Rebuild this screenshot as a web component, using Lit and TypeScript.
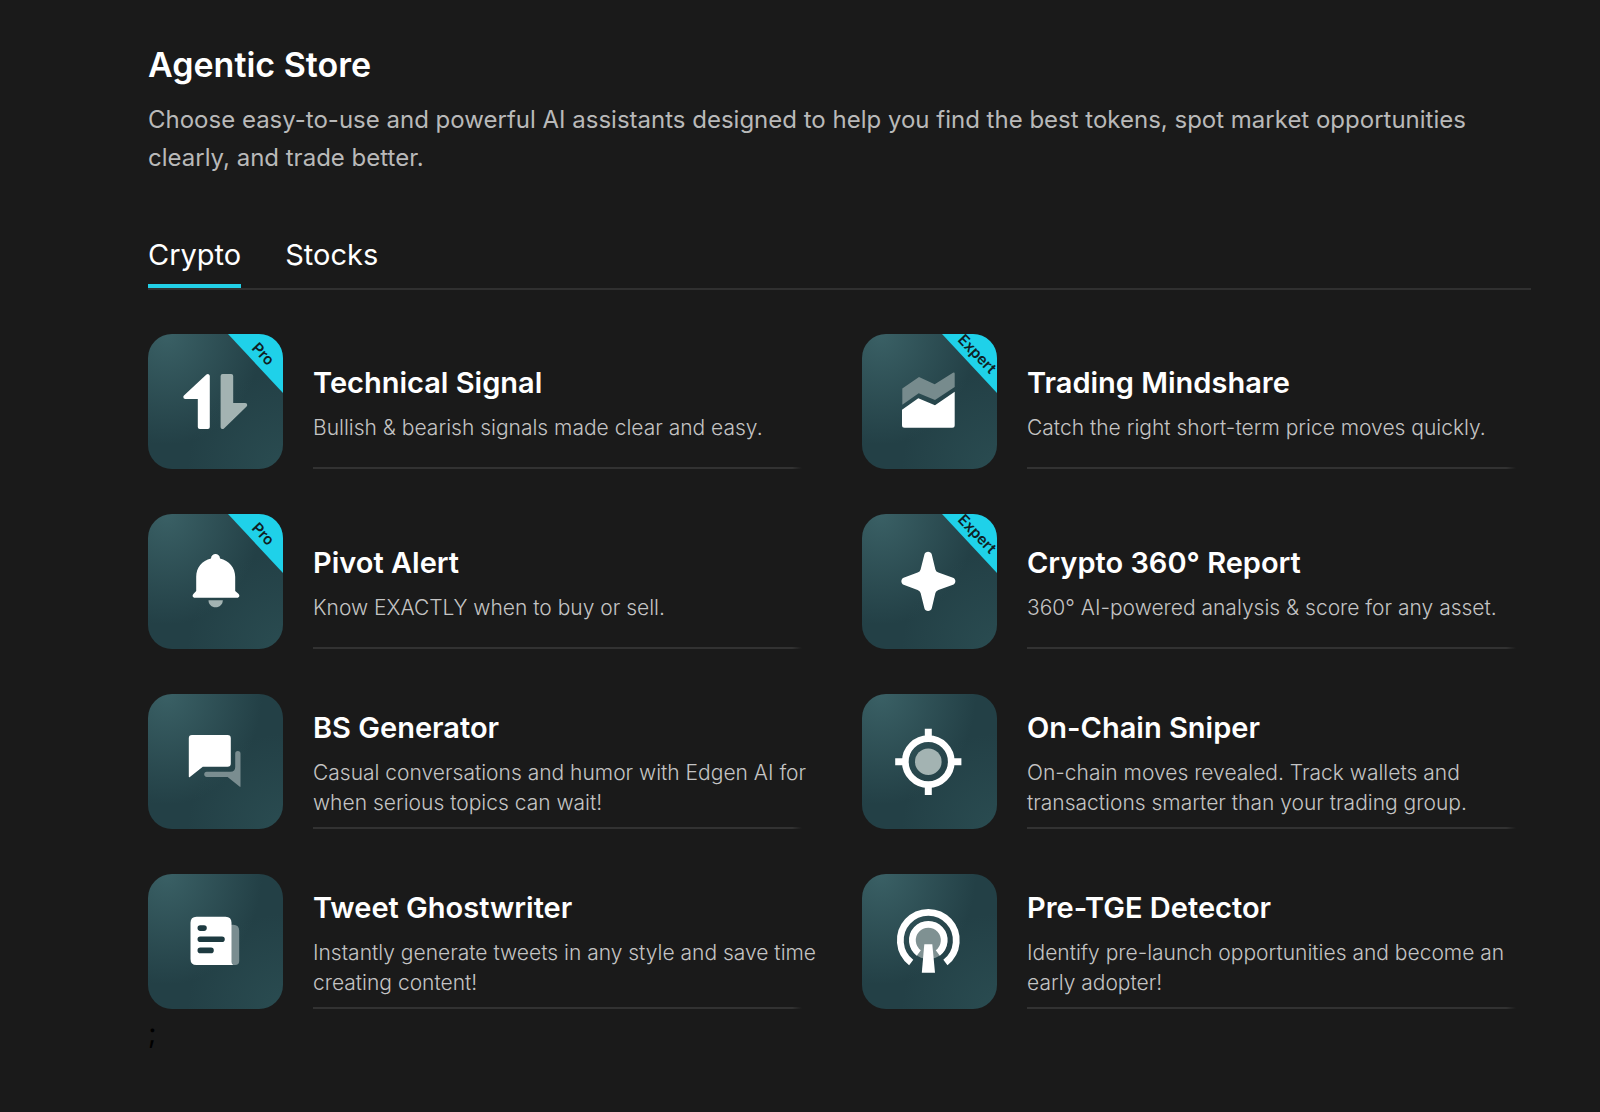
import { LitElement, html, css, svg, nothing, type TemplateResult } from "lit";
import { customElement, property, state } from "lit/decorators.js";

interface Agent {
  name: string;
  text: string;
  icon: string;
  plan?: string;
}

const AGENTS: Agent[] = [
  { name: "Technical Signal", text: "Bullish & bearish signals made clear and easy.", icon: "signal", plan: "Pro" },
  { name: "Trading Mindshare", text: "Catch the right short-term price moves quickly.", icon: "chart", plan: "Expert" },
  { name: "Pivot Alert", text: "Know EXACTLY when to buy or sell.", icon: "bell", plan: "Pro" },
  { name: "Crypto 360° Report", text: "360° AI-powered analysis & score for any asset.", icon: "star", plan: "Expert" },
  { name: "BS Generator", text: "Casual conversations and humor with Edgen AI for when serious topics can wait!", icon: "chat" },
  { name: "On-Chain Sniper", text: "On-chain moves revealed. Track wallets and transactions smarter than your trading group.", icon: "target" },
  { name: "Tweet Ghostwriter", text: "Instantly generate tweets in any style and save time creating content!", icon: "page" },
  { name: "Pre-TGE Detector", text: "Identify pre-launch opportunities and become an early adopter!", icon: "beacon" },
];

const ICONS: Record<string, TemplateResult> = {
  signal: svg`
    <path d="M59.8 42V93H51.8V63H37.3Z" fill="#fff" stroke="#fff" stroke-width="4" stroke-linejoin="round"/>
    <path d="M74.6 42H83.2V71H97.2L74.6 93Z" fill="#a3b3b2" stroke="#a3b3b2" stroke-width="4" stroke-linejoin="round"/>`,
  chart: svg`
    <path d="M40.3 54.6L57 43L72.7 50.3L91 38.8Q92.7 38 92.7 39.8V53L73 66L56.7 59.3L40.3 70.7Z" fill="#778b8d"/>
    <path d="M40 75.7L56.3 64.3L73 71.3L92.7 57.7V91.2Q92.7 93.7 90.2 93.7H42.5Q40 93.7 40 91.2Z" fill="#fff"/>`,
  bell: svg`
    <path d="M63 44.5C63 38.4 72 38.4 72 44.5C81 46.5 87.2 53.6 87.2 62.7V77L90.4 79.7C92.2 81.4 91.2 83.7 89.2 83.7H46.8C44.8 83.7 43.8 81.4 45.6 79.7L48.2 77V62.7C48.2 53.6 54 46.5 63 44.5Z" fill="#fff"/>
    <path d="M60.5 86.3H74.8C74.8 90.6 71.6 93.3 67.6 93.3S60.5 90.6 60.5 86.3Z" fill="#a3b3b2"/>`,
  star: svg`
    <path d="M62.4 40.4C63.2 36.8 68.9 36.8 69.8 40.4L73.4 55.4Q74 57.8 76.4 58.6L91 63.8C94.2 65 94.2 69.6 91 70.8L76.4 75.9Q74 76.7 73.4 79L69.8 94.2C68.9 97.8 63.2 97.8 62.4 94.2L58.6 79Q58 76.7 55.6 75.9L41.6 70.8C38.6 69.6 38.6 65 41.6 63.8L55.6 58.6Q58 57.8 58.6 55.4Z" fill="#fff"/>`,
  chat: svg`
    <path d="M44 41H79.6Q82.8 41 82.8 44.2V69.5Q82.8 72.7 79.6 72.7H54.8L41.9 83Q40.8 83.6 40.8 82.4V44.2Q40.8 41 44 41Z" fill="#fff"/>
    <path d="M89.8 57Q92.5 57 92.5 59.7V92.2Q92.5 93.4 91.5 92.6L79.6 83H58.8C55.3 83 55.3 77.7 58.8 77.7H82.5Q87.2 77.7 87.2 73V59.7Q87.2 57 89.8 57Z" fill="#7a8d90"/>`,
  target: svg`
    <circle cx="66.3" cy="67.7" r="23" fill="none" stroke="#fff" stroke-width="6.8"/>
    <path d="M66.3 34.7V45M66.3 90.5V101M33.2 67.7H43.5M89 67.7H99.4" stroke="#fff" stroke-width="7"/>
    <circle cx="66.3" cy="67.7" r="13.3" fill="#a3b3b2"/>`,
  page: svg`
    <path d="M81 50.7H85.2Q91.2 50.7 91.2 56.7V87Q91.2 91 87.2 91H81Z" fill="#7a8d90"/>
    <path d="M48.5 42.7H77.5Q83.5 42.7 83.5 48.7V88Q83.5 90 85.2 91H48.5Q42.5 91 42.5 85V48.7Q42.5 42.7 48.5 42.7Z" fill="#fff"/>
    <path d="M52.3 54.1H56M52.3 65.3H74M52.3 76.4H63" stroke="#1d3a40" stroke-width="5.6" stroke-linecap="round"/>`,
  beacon: svg`
    <circle cx="66.3" cy="66.3" r="19" fill="#7f9192"/>
    <path d="M49.2 88.5A28 28 0 1 1 83.4 88.5M56.8 79A15.9 15.9 0 1 1 75.8 79" fill="none" stroke="#fff" stroke-width="6.8"/>
    <path d="M62.3 70.3H70.3L73 98.7H59.8Z" fill="#fff"/>`,
};

@customElement("agent-card")
export class AgentCard extends LitElement {
  @property({ attribute: false }) agent!: Agent;

  static styles = css`
    :host { display: block; }
    .card { display: flex; gap: 30px; color: inherit; text-decoration: none; }
    .tile {
      position: relative;
      flex: none;
      width: 135px;
      height: 135px;
    }
    .icon {
      display: block;
      width: 100%;
      height: 100%;
      border-radius: 24px;
      background:
        radial-gradient(circle at 100% 100%, #2a4c51 0, #2a4c5100 50%),
        radial-gradient(ellipse at 14% 0%, #3a6065 0, #3a606500 58%),
        #234046;
    }
    .ribbon {
      position: absolute;
      top: 0;
      right: 0;
      width: 55px;
      height: 59px;
      border-top-right-radius: 24px;
      background: #1fd1e9;
      clip-path: polygon(0 0, 100% 0, 100% 100%);
    }
    .plan {
      position: absolute;
      top: 20px;
      left: 115px;
      width: max-content;
      translate: -50% -50%;
      rotate: 46deg;
      color: #0f1f24;
      font-size: 15px;
      font-weight: 600;
      line-height: 20px;
    }
    .body {
      position: relative;
      flex: 1;
      min-width: 0;
      display: flex;
      flex-direction: column;
      justify-content: center;
      gap: 12px;
      padding-top: 4px;
      box-sizing: border-box;
    }
    .body::after {
      content: "";
      position: absolute;
      left: 0;
      right: 15px;
      bottom: 0;
      height: 2px;
      background: linear-gradient(90deg, #323232 98%, #32323200);
    }
    .name { margin: 0; font-size: 29px; line-height: 36px; font-weight: 600; color: #fff; }
    .text { margin: 0; font-size: 21px; line-height: 30px; font-weight: 300; color: #c4c4c4; }
  `;

  render() {
    const { name, text, icon, plan } = this.agent;
    return html`
      <a class="card" href="#">
        <div class="tile">
          <svg class="icon" viewBox="0 0 135 135" aria-hidden="true">${ICONS[icon]}</svg>
          ${plan ? html`<div class="ribbon"></div><span class="plan">${plan}</span>` : nothing}
        </div>
        <div class="body">
          <h2 class="name">${name}</h2>
          <p class="text">${text}</p>
        </div>
      </a>
    `;
  }
}

@customElement("app-root")
export class AppRoot extends LitElement {
  @state() private tab = "Crypto";

  static styles = css`
    :host {
      display: block;
      min-height: 100vh;
      box-sizing: border-box;
      padding: 43px 69px 44px 148px;
      background: #1a1a1a;
      color: #fff;
      font-family: Inter, "Liberation Sans", sans-serif;
    }
    .title { margin: 0; font-size: 34px; line-height: 44px; font-weight: 600; }
    .intro { margin: 14px 0 0; font-size: 24px; line-height: 38px; font-weight: 400; color: #b9b9b9; }
    .tabs { display: flex; gap: 44px; margin-top: 54px; border-bottom: 2px solid #303030; }
    .tab {
      padding: 6px 0 11px;
      border: 0;
      border-bottom: 4px solid transparent;
      background: none;
      color: #fff;
      font: inherit;
      font-size: 29px;
      line-height: 36px;
      font-weight: 400;
      cursor: pointer;
    }
    .tab.active { border-color: #22cfe6; }
    .grid {
      display: grid;
      grid-template-columns: repeat(auto-fit, minmax(540px, 1fr));
      gap: 45px;
      margin-top: 44px;
    }
    .mark { margin: 6px 0 0; color: #000; font-size: 28px; line-height: 36px; }
  `;

  render() {
    return html`
      <main>
        <h1 class="title">Agentic Store</h1>
        <p class="intro">
          Choose easy-to-use and powerful AI assistants designed to help you find the best tokens, spot market
          opportunities clearly, and trade better.
        </p>
        <div class="tabs" role="tablist">
          ${["Crypto", "Stocks"].map(
            (t) => html`<button
              class="tab ${this.tab === t ? "active" : ""}"
              role="tab"
              aria-selected=${this.tab === t}
              @click=${() => (this.tab = t)}
            >${t}</button>`,
          )}
        </div>
        <section class="grid">
          ${AGENTS.map((a) => html`<agent-card .agent=${a}></agent-card>`)}
        </section>
        <p class="mark">;</p>
      </main>
    `;
  }
}
